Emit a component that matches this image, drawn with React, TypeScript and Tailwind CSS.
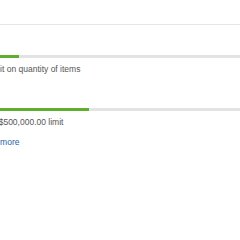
import React from "react";

function Bar({ fill }: { fill: number }) {
  return (
    <div className="h-[3px] w-full bg-[#e3e3e3]">
      <div className="h-full bg-[#5fae2e]" style={{ width: `${fill}px` }} />
    </div>
  );
}

export default function App() {
  return (
    <div className="w-[240px] h-[240px] overflow-hidden bg-white font-['Liberation_Sans',Arial,sans-serif] text-[8.5px] leading-[14px]">
      <div className="h-[24px]" />
      <div className="h-px bg-[#e6e6e6]" />
      <div className="-ml-[24px] w-[400px] flex flex-col">
        <div className="mt-[8px] text-[#333]">Items</div>
        <div className="mt-[8px]">
          <Bar fill={43} />
        </div>
        <div className="mt-[4px] text-[#555]">No limit on quantity of items</div>
        <div className="mt-[7px] -ml-[3px] text-[#999]">Orders</div>
        <div className="mt-[11px]">
          <Bar fill={113} />
        </div>
        <div className="mt-[4px] text-[#555]">Up to $500,000.00 limit</div>
        <a className="mt-[6px] text-[#1a5fa8]">Learn more</a>
      </div>
    </div>
  );
}
